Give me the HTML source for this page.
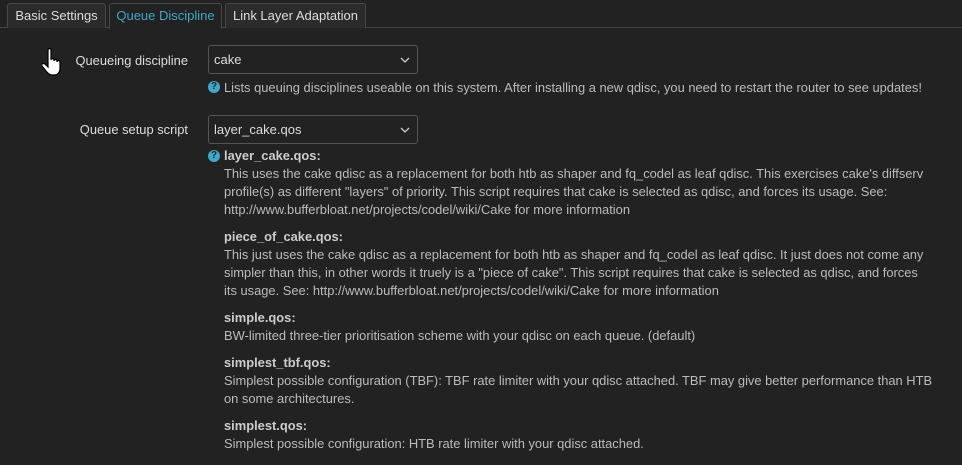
<!DOCTYPE html>
<html><head><meta charset="utf-8"><style>
body{margin:0;background:#222;width:962px;height:465px;overflow:hidden;font-family:"Liberation Sans",Arial,sans-serif;font-size:12.9px;color:#ccc;position:relative}
.tabs{position:absolute;left:0;top:0;width:962px;height:28px;border-bottom:1px solid #444;box-sizing:border-box}
.tab{position:absolute;top:3px;height:25px;box-sizing:border-box;border:1px solid #484848;border-bottom:none;border-radius:3px 3px 0 0;background:#2b2b2b;line-height:24px;text-align:center;font-size:13px;color:#ddd}
.tab.a{background:#222;color:#3fa7c9;height:26px}
.lbl{position:absolute;right:774px;font-size:12.9px;color:#ddd;white-space:nowrap}
.sel{position:absolute;left:208px;width:210px;height:29px;box-sizing:border-box;border:1px solid #555;border-radius:3px;background:#222;color:#ddd;font-size:13px;line-height:27px;padding-left:5px}
.sel svg{position:absolute;right:7px;top:11px}
.t{position:absolute;left:224px;white-space:nowrap;color:#bbb;line-height:18px}
.b{font-weight:bold;color:#ccc}
.q{position:absolute;left:208px;width:12px;height:12px;border-radius:50%;background:#3fa7c9;color:#222;font-weight:bold;font-size:10px;line-height:12px;text-align:center}
</style></head><body>
<div class="tabs">
<div class="tab" style="left:7px;width:99px">Basic Settings</div>
<div class="tab a" style="left:109px;width:113px">Queue Discipline</div>
<div class="tab" style="left:225px;width:141px">Link Layer Adaptation</div>
</div>
<svg style="position:absolute;left:42px;top:47px" width="26" height="32" viewBox="0 0 26 32"><path d="M6 3c0-2 3-2 3 0v10c0-2 3-2 3 0v1c0-2 3-2 3 0v1c0-2 3-2 3 0v6c0 4-2 7-6 7h-2c-3 0-4-2-6-4l-4-5c-1-2 1-3 3-2l3 3V3z" fill="#fff" stroke="#000" stroke-width="1.2"/></svg>
<div class="lbl" style="top:53px">Queueing discipline</div>
<div class="sel" style="top:45px">cake<svg width="10" height="6"><path d="M1 1l4 4 4-4" stroke="#ccc" fill="none" stroke-width="1.3"/></svg></div>
<div class="q" style="top:81px">?</div>
<div class="t" style="top:79px">Lists queuing disciplines useable on this system. After installing a new qdisc, you need to restart the router to see updates!</div>
<div class="lbl" style="top:122px">Queue setup script</div>
<div class="sel" style="top:115px">layer_cake.qos<svg width="10" height="6"><path d="M1 1l4 4 4-4" stroke="#ccc" fill="none" stroke-width="1.3"/></svg></div>
<div class="q" style="top:150px">?</div>
<div class="t" style="top:147px"><span class="b">layer_cake.qos:</span><br>This uses the cake qdisc as a replacement for both htb as shaper and fq_codel as leaf qdisc. This exercises cake's diffserv<br>profile(s) as different "layers" of priority. This script requires that cake is selected as qdisc, and forces its usage. See:<br>http://www.bufferbloat.net/projects/codel/wiki/Cake for more information</div>
<div class="t" style="top:228px"><span class="b">piece_of_cake.qos:</span><br>This just uses the cake qdisc as a replacement for both htb as shaper and fq_codel as leaf qdisc. It just does not come any<br>simpler than this, in other words it truely is a "piece of cake". This script requires that cake is selected as qdisc, and forces<br>its usage. See: http://www.bufferbloat.net/projects/codel/wiki/Cake for more information</div>
<div class="t" style="top:309px"><span class="b">simple.qos:</span><br>BW-limited three-tier prioritisation scheme with your qdisc on each queue. (default)</div>
<div class="t" style="top:354px"><span class="b">simplest_tbf.qos:</span><br>Simplest possible configuration (TBF): TBF rate limiter with your qdisc attached. TBF may give better performance than HTB<br>on some architectures.</div>
<div class="t" style="top:417px"><span class="b">simplest.qos:</span><br>Simplest possible configuration: HTB rate limiter with your qdisc attached.</div>
</body></html>
